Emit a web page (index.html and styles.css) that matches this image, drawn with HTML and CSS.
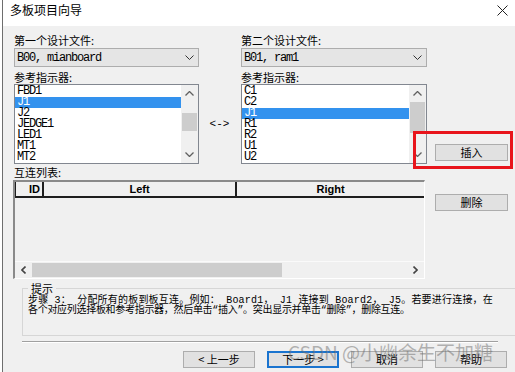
FILE: index.html
```html
<!DOCTYPE html>
<html>
<head>
<meta charset="utf-8">
<link rel="stylesheet" href="styles.css">
</head>
<body>
<div class="window">
  <div class="titlebar">
    <span class="title">多板项目向导</span>
    <svg class="close" width="11" height="11" viewBox="0 0 11 11"><path d="M0.5 0.5 L10.5 10.5 M10.5 0.5 L0.5 10.5" stroke="#222" stroke-width="1" fill="none"/></svg>
  </div>

  <div class="grid">
    <div class="lbl c1 r1">第一个设计文件:</div>
    <div class="lbl c3 r1">第二个设计文件:</div>

    <div class="combo c1 r2"><span>B00, mianboard</span><svg width="9" height="5" viewBox="0 0 9 5"><polyline points="0.5,0.5 4.5,4.5 8.5,0.5" fill="none" stroke="#333" stroke-width="1"/></svg></div>
    <div class="combo c3 r2"><span>B01, ram1</span><svg width="9" height="5" viewBox="0 0 9 5"><polyline points="0.5,0.5 4.5,4.5 8.5,0.5" fill="none" stroke="#333" stroke-width="1"/></svg></div>

    <div class="lbl lbl-end c1 r3">参考指示器:</div>
    <div class="lbl lbl-end c3 r3">参考指示器:</div>

    <div class="list c1 r4">
      <div class="items">
        <div class="item">FBD1</div>
        <div class="item sel">J1</div>
        <div class="item">J2</div>
        <div class="item">JEDGE1</div>
        <div class="item">LED1</div>
        <div class="item">MT1</div>
        <div class="item">MT2</div>
      </div>
      <div class="vscroll">
        <div class="varrow"><svg width="9" height="5" viewBox="0 0 9 5"><polyline points="0.5,4.5 4.5,0.5 8.5,4.5" fill="none" stroke="#606060" stroke-width="1.3"/></svg></div>
        <div class="vtrack"><div class="vthumb thumb1"></div></div>
        <div class="varrow"><svg width="9" height="5" viewBox="0 0 9 5"><polyline points="0.5,0.5 4.5,4.5 8.5,0.5" fill="none" stroke="#606060" stroke-width="1.3"/></svg></div>
      </div>
    </div>

    <div class="swap c2 r4">&lt;-&gt;</div>

    <div class="list c3 r4">
      <div class="items">
        <div class="item">C1</div>
        <div class="item">C2</div>
        <div class="item sel">J1</div>
        <div class="item">R1</div>
        <div class="item">R2</div>
        <div class="item">U1</div>
        <div class="item">U2</div>
      </div>
      <div class="vscroll">
        <div class="varrow"><svg width="9" height="5" viewBox="0 0 9 5"><polyline points="0.5,4.5 4.5,0.5 8.5,4.5" fill="none" stroke="#606060" stroke-width="1.3"/></svg></div>
        <div class="vtrack"><div class="vthumb thumb2"></div></div>
        <div class="varrow"><svg width="9" height="5" viewBox="0 0 9 5"><polyline points="0.5,0.5 4.5,4.5 8.5,0.5" fill="none" stroke="#606060" stroke-width="1.3"/></svg></div>
      </div>
    </div>

    <div class="btn btn-insert c4 r4">插入</div>

    <div class="lbl lbl-mid c1 r5">互连列表:</div>

    <div class="table r6">
      <div class="thead">
        <div class="th th-id">ID</div>
        <div class="th th-left">Left</div>
        <div class="th th-right">Right</div>
      </div>
      <div class="tbody"></div>
      <div class="hscroll">
        <div class="harrow"><svg width="5" height="8" viewBox="0 0 5 8"><polyline points="4.5,0.5 1,4 4.5,7.5" fill="none" stroke="#444" stroke-width="1.6"/></svg></div>
        <div class="htrack"><div class="hthumb"></div></div>
        <div class="harrow"><svg width="5" height="8" viewBox="0 0 5 8"><polyline points="0.5,0.5 4,4 0.5,7.5" fill="none" stroke="#444" stroke-width="1.6"/></svg></div>
      </div>
    </div>

    <div class="btn btn-delete c4 r6">删除</div>
  </div>

  <fieldset class="hint">
    <legend>提示</legend>
    <p><span class="wide">步骤 3： 分配所有的板到板互连。例如： Board1， J1 连接到 Board2， J5。若要进行连接，在</span><br>各个对应列选择板和参考指示器，然后单击“插入”。突出显示并单击“删除”，删除互连。</p>
  </fieldset>

  <div class="sep"></div>

  <div class="buttons">
    <div class="btn">&lt; 上一步</div>
    <div class="btn btn-default">下一步 &gt;</div>
    <div class="btn">取消</div>
    <div class="btn">帮助</div>
  </div>

  <div class="highlight"></div>
  <div class="watermark">CSDN @小幽余生不加糖</div>
</div>
</body>
</html>
```

FILE: styles.css
```css
* { box-sizing: border-box; }
html, body { margin: 0; padding: 0; background: #fff; }
body {
  font-family: "Noto Sans CJK SC", "Noto Sans", sans-serif;
  font-size: 11px;
  color: #000;
}
.window {
  position: relative;
  margin-left: 2px;
  width: 513px;
  height: 372px;
  border-left: 1px solid #6e6e6e;
  background: #f0f0f0;
  overflow: hidden;
}
.titlebar {
  height: 26px;
  background: #fff;
  display: flex;
  justify-content: space-between;
  align-items: flex-start;
  padding: 0 7px;
}
.title { font-size: 12px; line-height: 20px; }
.close { margin-top: 5px; }

.grid {
  display: grid;
  grid-template-columns: 185px 42px 186px 1fr;
  grid-template-rows: 14px 20px 17px 80px 16px 99px;
  padding: 7px 0 0 11px;
}
.c1 { grid-column: 1; }
.c2 { grid-column: 2; }
.c3 { grid-column: 3; }
.c4 { grid-column: 4; }
.r1 { grid-row: 1; }
.r2 { grid-row: 2; }
.r3 { grid-row: 3; }
.r4 { grid-row: 4; }
.r5 { grid-row: 5; }
.r6 { grid-row: 6; }

.lbl { line-height: 14px; white-space: nowrap; }
.lbl-end { align-self: end; line-height: 13px; }
.lbl-mid { align-self: center; line-height: 13px; }

.combo {
  align-self: end;
  height: 19px;
  border: 1px solid #adadad;
  background: #e5e5e5;
  display: flex;
  align-items: center;
  justify-content: space-between;
  padding: 0 4px 0 2px;
  font-family: "Liberation Mono", "Noto Sans CJK SC", monospace;
  font-size: 12px;
  letter-spacing: -1.2px;
}

.list {
  display: flex;
  height: 80px;
  border: 1px solid #828790;
  background: #fff;
  overflow: hidden;
}
.items {
  flex: 1;
  padding-top: 1px;
  font-family: "Liberation Mono", monospace;
  font-size: 12px;
  letter-spacing: -1.2px;
}
.item { height: 11px; line-height: 11px; padding-left: 2px; }
.item.sel { background: #3392ee; color: #fff; }

.vscroll {
  width: 17px;
  background: #f0f0f0;
  display: flex;
  flex-direction: column;
}
.varrow {
  height: 17px;
  display: flex;
  align-items: center;
  justify-content: center;
}
.vtrack { flex: 1; padding: 0 1px; }
.vthumb { background: #cdcdcd; }
.thumb1 { margin-top: 11px; height: 18px; }
.thumb2 { margin-top: 0; height: 31px; }

.swap {
  align-self: center;
  justify-self: center;
  font-family: "Liberation Mono", monospace;
  font-size: 11px;
  margin-left: -1px;
}

.btn {
  height: 17px;
  width: 72px;
  border: 1px solid #adadad;
  background: #e1e1e1;
  text-align: center;
  line-height: 15px;
  font-size: 11px;
  white-space: nowrap;
}
.btn-insert { align-self: end; margin: 0 0 3px 8px; width: 73px; }
.btn-delete { align-self: start; margin: 14px 0 0 8px; width: 73px; }
.btn-default { border: 2px solid #1a74cf; line-height: 13px; }

.table {
  grid-column: 1 / 4;
  margin: 0 2px 0 -1px;
  height: 99px;
  border-style: solid;
  border-width: 2px 1px 1px 2px;
  border-color: #8a8a8a #ffffff #ffffff #8a8a8a;
  display: flex;
  flex-direction: column;
  background: #f0f0f0;
}
.thead {
  display: flex;
  height: 16px;
  border-bottom: 2px solid #1e1e1e;
  border-left: 1px solid #1e1e1e;
  font-family: "Liberation Sans", Arial, sans-serif;
  font-weight: bold;
  font-size: 11px;
  line-height: 14px;
}
.th { border-right: 2px solid #1e1e1e; }
.th-id { width: 28px; text-align: right; padding-right: 2px; }
.th-left { width: 193px; text-align: center; }
.th-right { flex: 1; text-align: center; border-right: none; }
.tbody { flex: 1; }
.hscroll {
  height: 17px;
  display: flex;
  border-top: 1px solid #fafafa;
  background: #f0f0f0;
}
.harrow {
  width: 17px;
  display: flex;
  align-items: center;
  justify-content: center;
}
.htrack { flex: 1; padding: 1px 0; }
.hthumb { width: 250px; height: 100%; background: #cdcdcd; }

.hint {
  margin: 3px 0 0 19px;
  width: 500px;
  height: 54px;
  border: 1px solid #d6d6d6;
  padding: 2px 0 0 5px;
}
.hint legend {
  padding: 0 3px;
  font-size: 11px;
  line-height: 12px;
}
.hint p {
  margin: 0;
  font-family: "Liberation Mono", "Noto Sans CJK SC", monospace;
  font-size: 10px;
  line-height: 10px;
  letter-spacing: -0.3px;
  white-space: nowrap;
}
.hint .wide { letter-spacing: 0.2px; }

.sep {
  margin: 5px 0 0 19px;
  width: 476px;
  height: 2px;
  border-top: 1px solid #a0a0a0;
  border-bottom: 1px solid #ffffff;
}

.buttons {
  display: flex;
  gap: 12px;
  margin-top: 8px;
  padding-left: 180px;
}

.highlight {
  position: absolute;
  left: 410px;
  top: 131px;
  width: 100px;
  height: 38px;
  border: 3px solid #e8141b;
}
.watermark {
  position: absolute;
  left: 285px;
  top: 340px;
  font-size: 19px;
  line-height: 24px;
  color: rgba(110, 110, 110, 0.5);
  white-space: nowrap;
}
```
